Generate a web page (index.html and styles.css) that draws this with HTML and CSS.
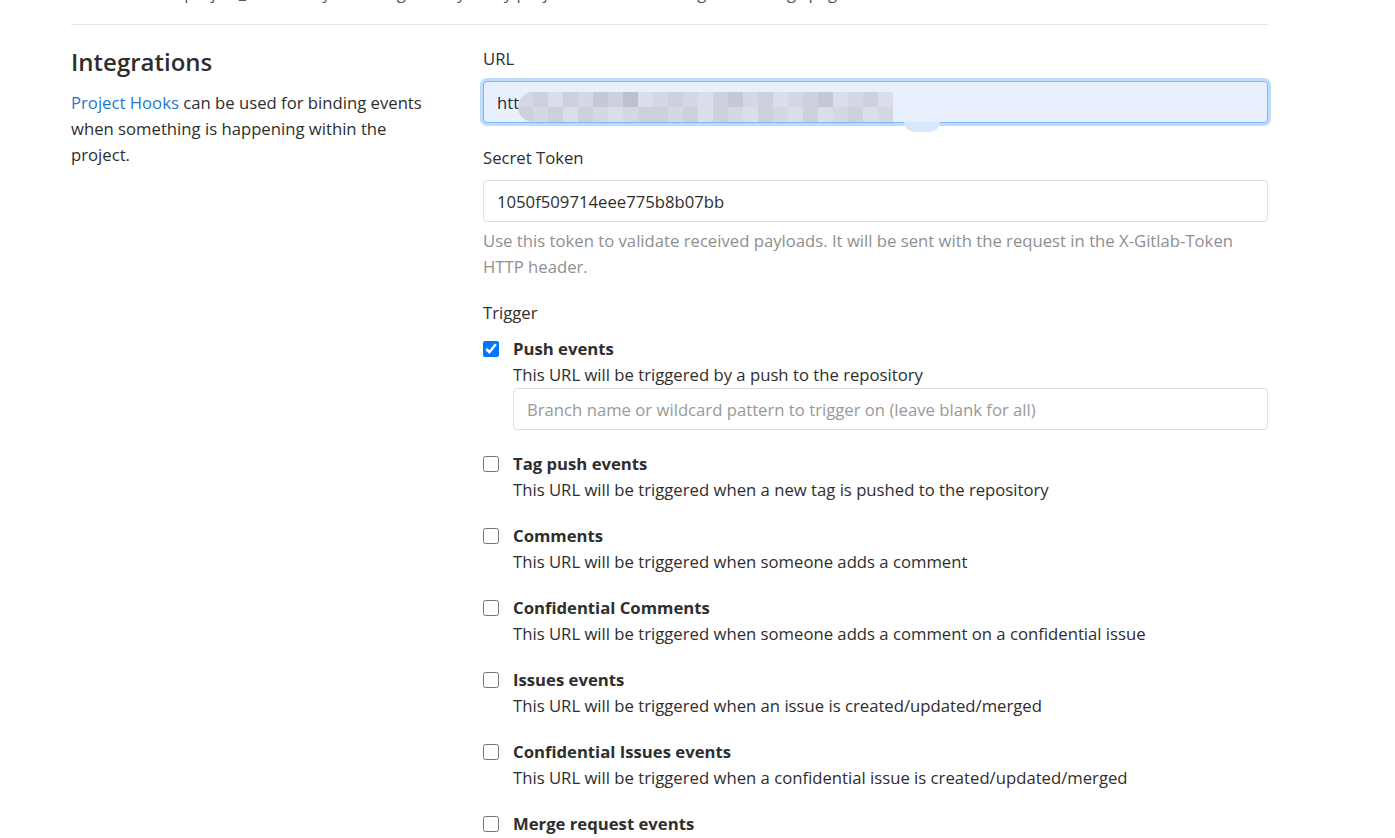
FILE: index.html
```html
<!DOCTYPE html>
<html>
<head>
<meta charset="utf-8">
<link rel="stylesheet" href="styles.css">
</head>
<body>
<div class="page">
  <div class="prev-clip"><p class="prev-text">Webhooks for project_hooks may be configured by every project maintainer using this settings page</p></div>
  <hr class="divider">
  <div class="row">
    <div class="side">
      <h4 class="side-title">Integrations</h4>
      <p class="side-desc"><a href="#" class="link">Project Hooks</a> can be used for binding events when something is happening within the project.</p>
    </div>
    <div class="main">
      <div class="group">
        <label class="label">URL</label>
        <div class="field focused">
          <span class="field-text">htt</span>
          <div class="mosaic">
            <span class="m a"></span><span class="m b"></span><span class="m c"></span><span class="m b"></span><span class="m a"></span><span class="m d"></span><span class="m b"></span><span class="m e"></span><span class="m c"></span><span class="m a"></span><span class="m b"></span><span class="m a"></span><span class="m c"></span><span class="m b"></span><span class="m d"></span><span class="m a"></span><span class="m b"></span><span class="m c"></span><span class="m a"></span><span class="m b"></span><span class="m d"></span><span class="m c"></span><span class="m a"></span><span class="m b"></span><span class="m c"></span>
            <span class="m b"></span><span class="m a"></span><span class="m b"></span><span class="m c"></span><span class="m b"></span><span class="m a"></span><span class="m c"></span><span class="m a"></span><span class="m b"></span><span class="m b"></span><span class="m a"></span><span class="m b"></span><span class="m c"></span><span class="m b"></span><span class="m a"></span><span class="m c"></span><span class="m b"></span><span class="m a"></span><span class="m c"></span><span class="m b"></span><span class="m c"></span><span class="m a"></span><span class="m b"></span><span class="m c"></span><span class="m a"></span>
          </div>
          <span class="bump"></span>
        </div>
      </div>
      <div class="group group-token">
        <label class="label">Secret Token</label>
        <div class="field"><span class="field-text">1050f509714eee775b8b07bb</span></div>
        <p class="help">Use this token to validate received payloads. It will be sent with the request in the X-Gitlab-Token HTTP header.</p>
      </div>
      <div class="group trigger">
        <label class="label">Trigger</label>
        <ul class="events">
          <li class="event">
            <input type="checkbox" class="check" checked>
            <div class="event-body">
              <div class="event-name">Push events</div>
              <div class="event-desc">This URL will be triggered by a push to the repository</div>
              <div class="field branch"><span class="placeholder">Branch name or wildcard pattern to trigger on (leave blank for all)</span></div>
            </div>
          </li>
          <li class="event">
            <input type="checkbox" class="check">
            <div class="event-body">
              <div class="event-name">Tag push events</div>
              <div class="event-desc">This URL will be triggered when a new tag is pushed to the repository</div>
            </div>
          </li>
          <li class="event">
            <input type="checkbox" class="check">
            <div class="event-body">
              <div class="event-name">Comments</div>
              <div class="event-desc">This URL will be triggered when someone adds a comment</div>
            </div>
          </li>
          <li class="event">
            <input type="checkbox" class="check">
            <div class="event-body">
              <div class="event-name">Confidential Comments</div>
              <div class="event-desc">This URL will be triggered when someone adds a comment on a confidential issue</div>
            </div>
          </li>
          <li class="event">
            <input type="checkbox" class="check">
            <div class="event-body">
              <div class="event-name">Issues events</div>
              <div class="event-desc">This URL will be triggered when an issue is created/updated/merged</div>
            </div>
          </li>
          <li class="event">
            <input type="checkbox" class="check">
            <div class="event-body">
              <div class="event-name">Confidential Issues events</div>
              <div class="event-desc">This URL will be triggered when a confidential issue is created/updated/merged</div>
            </div>
          </li>
          <li class="event">
            <input type="checkbox" class="check">
            <div class="event-body">
              <div class="event-name">Merge request events</div>
              <div class="event-desc">This URL will be triggered when a merge request is created/updated/merged</div>
            </div>
          </li>
        </ul>
      </div>
    </div>
  </div>
</div>
</body>
</html>
```
FILE: styles.css
```css
html, body {
  margin: 0;
  padding: 0;
  background: #fff;
}
body {
  font-family: "Open Sans", "Noto Sans", "Liberation Sans", sans-serif;
  font-size: 16.7px;
  color: #2e2e2e;
  overflow: hidden;
  height: 838px;
}
.page {
  width: 1197px;
  margin-left: 71px;
}
.prev-clip {
  height: 24px;
  overflow: hidden;
}
.prev-text {
  margin: -20px 0 0 0;
  line-height: 26px;
  color: #2e2e2e;
  opacity: 0.8;
}
.divider {
  margin: 0;
  border: 0;
  border-top: 1px solid #e5e5e5;
}
.row {
  display: flex;
  padding-top: 21px;
}
.side {
  width: 412px;
  flex: none;
}
.side-title {
  margin: 0;
  font-size: 24px;
  line-height: 32px;
  font-weight: 600;
  color: #2e2e2e;
}
.side-desc {
  margin: 12px 0 0 0;
  width: 360px;
  line-height: 26px;
}
.link {
  color: #1f78d1;
  text-decoration: none;
}
.main {
  flex: 1;
  min-width: 0;
}
.group {
  margin-bottom: 22px;
}
.group-token {
  margin-bottom: 20px;
}
.label {
  display: block;
  line-height: 26px;
  margin-bottom: 9px;
}
.field {
  position: relative;
  box-sizing: border-box;
  height: 42px;
  border: 1px solid #dfdfdf;
  border-radius: 4px;
  background: #fff;
  display: flex;
  align-items: center;
  padding-left: 13px;
}
.field-text {
  color: #2e2e2e;
}
.focused {
  background: #e8f0fe;
  border-color: #80b6f5;
  box-shadow: 0 0 0 3px #bedcfb;
}
.mosaic {
  position: absolute;
  left: 34px;
  top: 10px;
  width: 375px;
  height: 30px;
  display: grid;
  grid-template-columns: repeat(25, 15px);
  grid-template-rows: 15px 15px;
  border-radius: 15px 0 0 15px;
  overflow: hidden;
}
.m.a { background: #d3d8e2; }
.m.b { background: #ccd1dc; }
.m.c { background: #d9dee8; }
.m.d { background: #c3c8d2; }
.m.e { background: #bdc1cb; }
.bump {
  position: absolute;
  left: 420px;
  top: 40px;
  width: 36px;
  height: 10px;
  background: #d9e8fb;
  border-radius: 0 0 18px 18px;
}
.help {
  margin: 6px 0 0 0;
  line-height: 26px;
  color: #8f8f8f;
}
.trigger {
  margin-bottom: 0;
}
.trigger .label {
  margin-bottom: 10px;
}
.events {
  list-style: none;
  margin: 0;
  padding: 0;
}
.event {
  display: flex;
  gap: 14px;
  margin-bottom: 20px;
}
.check {
  width: 16px;
  height: 16px;
  margin: 5px 0 0 0;
  flex: none;
  accent-color: #0075ff;
}
.event-body {
  flex: 1;
  min-width: 0;
}
.event-name {
  font-weight: 700;
  line-height: 26px;
}
.event-desc {
  line-height: 26px;
}
.branch {
  margin-top: 0;
  margin-bottom: 1px;
}
.placeholder {
  color: #999;
}
```
